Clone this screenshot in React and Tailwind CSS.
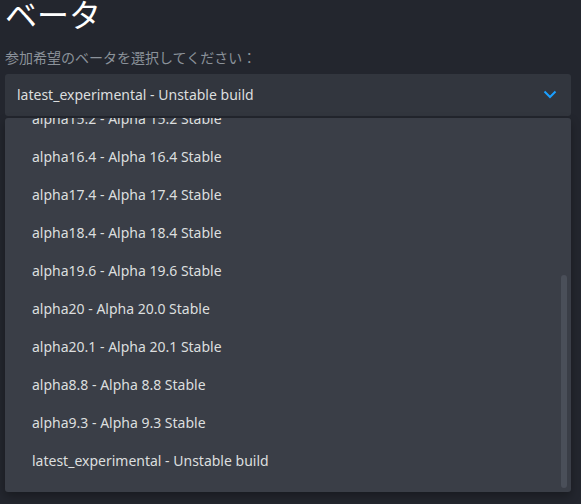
import React from 'react';

const items = [
  'alpha15.2 - Alpha 15.2 Stable',
  'alpha16.4 - Alpha 16.4 Stable',
  'alpha17.4 - Alpha 17.4 Stable',
  'alpha18.4 - Alpha 18.4 Stable',
  'alpha19.6 - Alpha 19.6 Stable',
  'alpha20 - Alpha 20.0 Stable',
  'alpha20.1 - Alpha 20.1 Stable',
  'alpha8.8 - Alpha 8.8 Stable',
  'alpha9.3 - Alpha 9.3 Stable',
  'latest_experimental - Unstable build',
];

const font = { fontFamily: '"Noto Sans", "Noto Sans CJK JP", sans-serif' };

const App = () => {
  return (
    <div className="w-[581px] h-[504px] bg-[#23262e] overflow-hidden" style={font}>
      <div className="pl-[5px] pr-[10px]">
        <h1 className="text-[32px] leading-[30px] text-white font-normal">ベータ</h1>
        <div className="mt-[20px] text-[14px] leading-[16px] text-[#8b929a]">
          参加希望のベータを選択してください：
        </div>

        <div className="mt-[8px] h-[42px] rounded-[3px] bg-[#32363e] flex items-center justify-between pl-[12px] pr-[14px] pb-[2px] text-[14px] text-[#dcdedf]">
          <span>latest_experimental - Unstable build</span>
          <svg width="14" height="9" viewBox="0 0 14 9" fill="none">
            <path d="M1.5 1.5 L7 7 L12.5 1.5" stroke="#1a9fff" strokeWidth="2" />
          </svg>
        </div>

        <div className="relative mt-[2px] h-[374px] rounded-[3px] bg-[#3a3e47] overflow-hidden shadow-[0_4px_10px_rgba(0,0,0,0.3)]">
          <div className="h-full flex flex-col justify-end pb-[13px]">
            {items.map((item) => (
              <div
                key={item}
                className="shrink-0 h-[38px] flex items-center pl-[27px] text-[14px] text-[#dcdedf]"
              >
                {item}
              </div>
            ))}
          </div>
          <div className="absolute right-[4px] top-[157px] bottom-[4px] w-[6px] rounded-full bg-[#4a4f59]" />
        </div>
      </div>
    </div>
  );
};

export default App;
